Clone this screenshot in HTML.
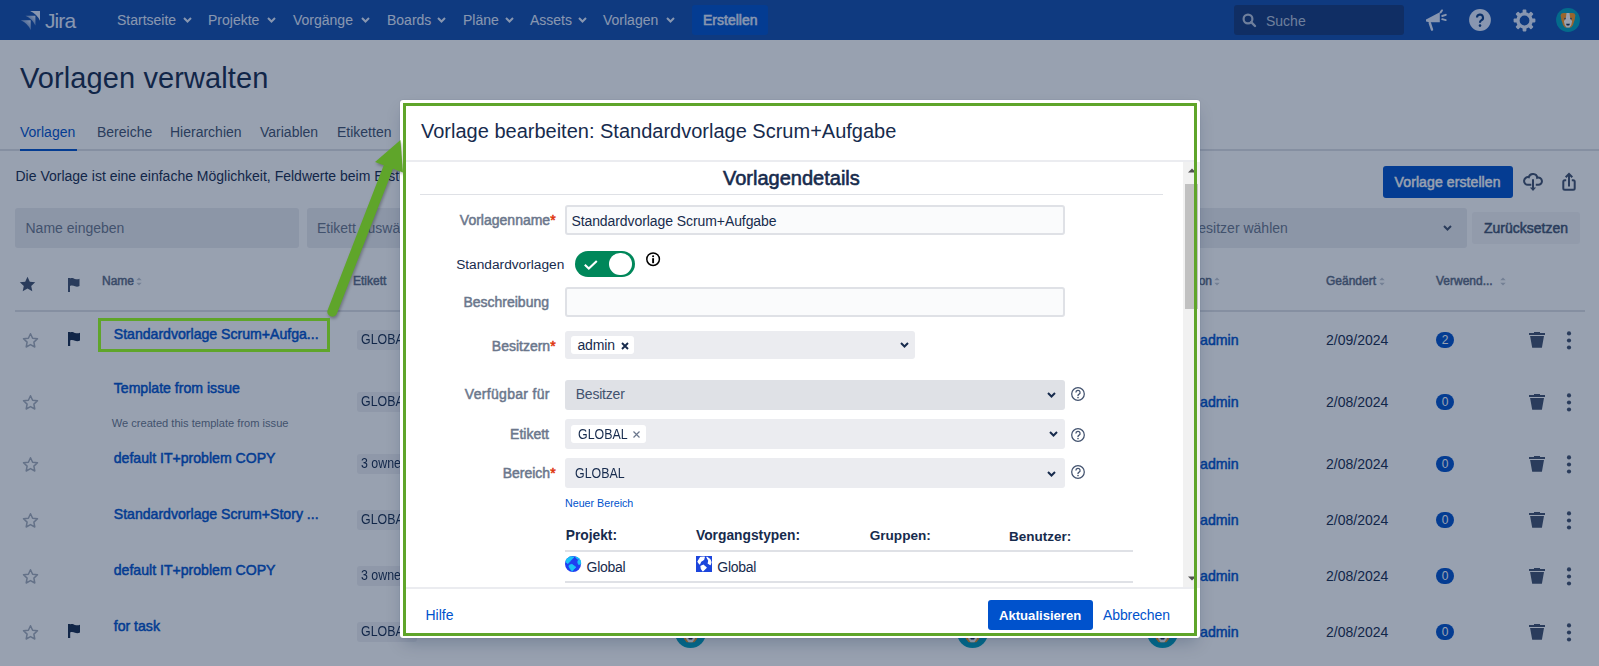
<!DOCTYPE html>
<html><head><meta charset="utf-8"><title>Vorlagen verwalten</title>
<style>
*{box-sizing:border-box;margin:0;padding:0}
html,body{width:1599px;height:666px;overflow:hidden;background:#fff;font-family:"Liberation Sans",sans-serif;color:#172b4d}
.t{position:absolute;white-space:nowrap;line-height:1}
.r{position:absolute}
.b{font-weight:bold}
.sb{-webkit-text-stroke:.5px currentColor}
.sb2{-webkit-text-stroke:.6px currentColor}
.req{color:#de350b}
svg{position:absolute;overflow:visible}
#page{position:absolute;left:0;top:0;width:1599px;height:666px;background:#fff}
#nav{position:absolute;left:0;top:0;width:1599px;height:40px;background:#134ead}
#blanket{position:absolute;left:0;top:0;width:1599px;height:666px;background:rgba(9,30,66,0.42)}
#modal{position:absolute;left:400px;top:100px;width:800px;height:538px;background:#fff;border-radius:3px;box-shadow:0 0 1px rgba(9,30,66,.31),0 8px 16px -4px rgba(9,30,66,.25)}
#gb{position:absolute;left:403px;top:103px;width:794px;height:533px;border:3px solid #5fa52a}
.badge{position:absolute;left:1436px;width:18px;height:16px;border-radius:8px;background:#0052cc;color:#fff;font-size:12px;line-height:16px;text-align:center}
</style></head><body>
<div id="page">
<div id="nav">
<svg style="left:20px;top:10px" width="21" height="21" viewBox="0 0 21 21"><defs><linearGradient id="lg" x1="0" y1="1" x2="1" y2="0"><stop offset="0" stop-color="#e4edff" stop-opacity=".95"/><stop offset=".55" stop-color="#e4edff" stop-opacity=".55"/><stop offset="1" stop-color="#e4edff"/></linearGradient></defs><path transform="translate(10.1 1)" d="M0 0H9.9V9.7Q6.8 3.1 0 0Z" fill="#e4edff"/><path transform="translate(5.5 5.8)" d="M0 0H9.9V9.7Q6.8 3.1 0 0Z" fill="url(#lg)"/><path transform="translate(0.8 10.3)" d="M0 0H9.9V9.7Q6.8 3.1 0 0Z" fill="url(#lg)"/></svg>
<div class="t " style="left:45px;top:10.02px;font-size:21px;color:#e4edff;letter-spacing:-.9px">Jira</div>
<div class="t " style="left:117px;top:13.15px;font-size:14px;color:#e4edff;">Startseite</div>
<div class="t " style="left:208px;top:13.15px;font-size:14px;color:#e4edff;">Projekte</div>
<div class="t " style="left:293px;top:13.15px;font-size:14px;color:#e4edff;">Vorgänge</div>
<div class="t " style="left:387px;top:13.15px;font-size:14px;color:#e4edff;">Boards</div>
<div class="t " style="left:463px;top:13.15px;font-size:14px;color:#e4edff;">Pläne</div>
<div class="t " style="left:530px;top:13.15px;font-size:14px;color:#e4edff;">Assets</div>
<div class="t " style="left:603px;top:13.15px;font-size:14px;color:#e4edff;">Vorlagen</div>
<svg style="left:183px;top:17px" width="9" height="6" viewBox="0 0 9 6"><path d="M1 1l3.5 3.5L8 1" stroke="#e4edff" stroke-width="2" fill="none"/></svg>
<svg style="left:267px;top:17px" width="9" height="6" viewBox="0 0 9 6"><path d="M1 1l3.5 3.5L8 1" stroke="#e4edff" stroke-width="2" fill="none"/></svg>
<svg style="left:361px;top:17px" width="9" height="6" viewBox="0 0 9 6"><path d="M1 1l3.5 3.5L8 1" stroke="#e4edff" stroke-width="2" fill="none"/></svg>
<svg style="left:437px;top:17px" width="9" height="6" viewBox="0 0 9 6"><path d="M1 1l3.5 3.5L8 1" stroke="#e4edff" stroke-width="2" fill="none"/></svg>
<svg style="left:504.5px;top:17px" width="9" height="6" viewBox="0 0 9 6"><path d="M1 1l3.5 3.5L8 1" stroke="#e4edff" stroke-width="2" fill="none"/></svg>
<svg style="left:577.5px;top:17px" width="9" height="6" viewBox="0 0 9 6"><path d="M1 1l3.5 3.5L8 1" stroke="#e4edff" stroke-width="2" fill="none"/></svg>
<svg style="left:666px;top:17px" width="9" height="6" viewBox="0 0 9 6"><path d="M1 1l3.5 3.5L8 1" stroke="#e4edff" stroke-width="2" fill="none"/></svg>
<div class="r" style="left:692px;top:5px;width:76px;height:30px;background:#0052cc;border-radius:3px"></div>
<div class="t sb" style="left:703px;top:13.15px;font-size:14px;color:#e4edff;">Erstellen</div>
<div class="r" style="left:1234px;top:5px;width:170px;height:30px;background:#153a7d;border-radius:3px"></div>
<svg style="left:1242px;top:13px" width="15" height="15" viewBox="0 0 15 15"><circle cx="6" cy="6" r="4.4" stroke="#b8c4dc" stroke-width="2.2" fill="none"/><path d="M9.2 9.2l3.8 3.8" stroke="#b8c4dc" stroke-width="2.4" stroke-linecap="round"/></svg>
<div class="t " style="left:1266px;top:14.15px;font-size:14px;color:#b8c4dc;">Suche</div>
<svg style="left:1425px;top:9px" width="23" height="22" viewBox="0 0 23 22"><path d="M1 10.5L14.8 3.2V13.2L4.5 13.3 1 12.6z" fill="#e4edff"/><path d="M4.8 14l2.2 6.6" stroke="#e4edff" stroke-width="2.4" stroke-linecap="round"/><path d="M15.6 3.4l1.4-2M17.2 7l3.6-1.2M17.2 10.2l3.6.9" stroke="#e4edff" stroke-width="1.9" stroke-linecap="round"/></svg>
<svg style="left:1469px;top:9px" width="22" height="22" viewBox="0 0 22 22"><circle cx="11" cy="11" r="10.9" fill="#e4edff"/><path d="M8 8.6a3 3 0 1 1 4.3 2.7c-.9.5-1.3 1-1.3 1.9v.6" stroke="#0b3d85" stroke-width="2.1" fill="none"/><circle cx="11" cy="16.6" r="1.3" fill="#0b3d85"/></svg>
<svg style="left:1513px;top:8.5px" width="23" height="23" viewBox="0 0 23 23"><g fill="#e4edff"><rect x="9.6" y="0.6" width="3.8" height="4" rx=".8" transform="rotate(0 11.5 11.5)"/><rect x="9.6" y="0.6" width="3.8" height="4" rx=".8" transform="rotate(45 11.5 11.5)"/><rect x="9.6" y="0.6" width="3.8" height="4" rx=".8" transform="rotate(90 11.5 11.5)"/><rect x="9.6" y="0.6" width="3.8" height="4" rx=".8" transform="rotate(135 11.5 11.5)"/><rect x="9.6" y="0.6" width="3.8" height="4" rx=".8" transform="rotate(180 11.5 11.5)"/><rect x="9.6" y="0.6" width="3.8" height="4" rx=".8" transform="rotate(225 11.5 11.5)"/><rect x="9.6" y="0.6" width="3.8" height="4" rx=".8" transform="rotate(270 11.5 11.5)"/><rect x="9.6" y="0.6" width="3.8" height="4" rx=".8" transform="rotate(315 11.5 11.5)"/></g><circle cx="11.5" cy="11.5" r="6.6" stroke="#e4edff" stroke-width="3.4" fill="none"/></svg>
<svg style="left:1556px;top:8px" width="24" height="24" viewBox="0 0 24 24"><circle cx="12" cy="12" r="11.9" fill="#00a3bf"/><path d="M4.6 7.2Q5 5 7.5 5h9Q19 5 19.4 7.2L18.6 12Q17.5 15 17 17l-2 2.5h-6L7 17Q6.5 15 5.4 12z" fill="#ff991f"/><path d="M10.5 5h3l.6 5 2 3.2-.8 3.8-1.8 2.5h-3l-1.8-2.5-.8-3.8 2-3.2z" fill="#fff"/><circle cx="9" cy="10.6" r=".9" fill="#42526e"/><circle cx="15" cy="10.6" r=".9" fill="#42526e"/><path d="M10 15.8h4l-.8 1.6h-2.4z" fill="#172b4d"/></svg>
</div>
<div class="t " style="left:20px;top:64.35px;font-size:29px;color:#172b4d;letter-spacing:.1px">Vorlagen verwalten</div>
<div class="r" style="left:0px;top:149px;width:1599px;height:2px;background:#dfe1e6;"></div>
<div class="t " style="left:20px;top:124.85px;font-size:14px;color:#0052cc;">Vorlagen</div>
<div class="r" style="left:20px;top:149px;width:57px;height:2px;background:#0052cc;"></div>
<div class="t " style="left:97px;top:124.85px;font-size:14px;color:#42526e;">Bereiche</div>
<div class="t " style="left:170px;top:124.85px;font-size:14px;color:#42526e;">Hierarchien</div>
<div class="t " style="left:260px;top:124.85px;font-size:14px;color:#42526e;">Variablen</div>
<div class="t " style="left:337px;top:124.85px;font-size:14px;color:#42526e;">Etiketten</div>
<div class="t " style="left:15.5px;top:169.40px;font-size:14px;color:#172b4d;">Die Vorlage ist eine einfache Möglichkeit, Feldwerte beim Erstellen von Vorgängen vorab auszufüllen.</div>
<div class="r" style="left:15px;top:208px;width:284px;height:40px;background:#ebecf0;border-radius:3px"></div>
<div class="t " style="left:25.5px;top:221.15px;font-size:14px;color:#6b778c;">Name eingeben</div>
<div class="r" style="left:307px;top:208px;width:300px;height:40px;background:#ebecf0;border-radius:3px"></div>
<div class="t " style="left:317px;top:221.15px;font-size:14px;color:#6b778c;">Etikett auswählen</div>
<div class="r" style="left:1100px;top:208px;width:367px;height:40px;background:#ebecf0;border-radius:3px"></div>
<div class="t " style="left:1189px;top:221.15px;font-size:14px;color:#6b778c;">Besitzer wählen</div>
<svg style="left:1443px;top:225px" width="9" height="6" viewBox="0 0 9 6"><path d="M1 1l3.5 3.5L8 1" stroke="#42526e" stroke-width="2" fill="none"/></svg>
<div class="r" style="left:1472px;top:212px;width:108px;height:32px;background:#f4f5f7;border-radius:3px"></div>
<div class="t sb" style="left:1484px;top:221.15px;font-size:14px;color:#42526e;">Zurücksetzen</div>
<div class="r" style="left:1383px;top:166px;width:130px;height:32px;background:#0052cc;border-radius:3px"></div>
<div class="t sb" style="left:1394.6px;top:175.15px;font-size:14px;color:#fff;letter-spacing:.1px">Vorlage erstellen</div>
<svg style="left:1522px;top:172px" width="22" height="20" viewBox="0 0 22 20"><path d="M9.3 12.8H6A3.85 3.85 0 1 1 6.8 5.2A4.26 4.26 0 0 1 15.2 5.8A3.6 3.6 0 1 1 16 12.8H13.8" stroke="#42526e" stroke-width="2" fill="none"/><path d="M11 7.3v9" stroke="#42526e" stroke-width="2"/><path d="M7.9 15.6h6.2L11 19z" fill="#42526e"/></svg>
<svg style="left:1561px;top:172px" width="16" height="20" viewBox="0 0 16 20"><path d="M5.2 8.2H3.8a1.5 1.5 0 0 0-1.5 1.5v6.6a1.5 1.5 0 0 0 1.5 1.5h8.4a1.5 1.5 0 0 0 1.5-1.5V9.7a1.5 1.5 0 0 0-1.5-1.5h-1.4" stroke="#42526e" stroke-width="2" fill="none"/><path d="M8 2.2v12.3M4.7 5.3L8 2l3.3 3.3" stroke="#42526e" stroke-width="2" fill="none"/></svg>
<svg style="left:18.5px;top:275.5px" width="17" height="17" viewBox="0 0 17 17"><path d="M8.5 .8l2.3 4.9 5.4.6-4 3.7 1.1 5.3-4.8-2.7-4.8 2.7 1.1-5.3-4-3.7 5.4-.6z" fill="#42526e"/></svg>
<svg style="left:67px;top:276.5px" width="13" height="15" viewBox="0 0 13 15"><path d="M1 1h2v14H1z" fill="#42526e"/><path d="M3 1.5c2-1 3.5 0 5 .5s3 .5 4.5-.3V9c-1.5.8-3 .8-4.5.3S5 8 3 9z" fill="#42526e"/></svg>
<div class="t sb" style="left:102px;top:274.84px;font-size:12px;color:#5e6c84;">Name</div>
<svg style="left:136px;top:276.5px" width="6" height="9" viewBox="0 0 6 9"><path d="M0.3 3.3L3 0.5 5.7 3.3zM0.3 5.7L3 8.5 5.7 5.7z" fill="#c1c7d0"/></svg>
<div class="t sb" style="left:353px;top:274.84px;font-size:12px;color:#5e6c84;">Etikett</div>
<div class="t sb" style="left:1172px;top:274.84px;font-size:12px;color:#5e6c84;">Version</div>
<svg style="left:1214px;top:276.5px" width="6" height="9" viewBox="0 0 6 9"><path d="M0.3 3.3L3 0.5 5.7 3.3zM0.3 5.7L3 8.5 5.7 5.7z" fill="#c1c7d0"/></svg>
<div class="t sb" style="left:1326px;top:274.84px;font-size:12px;color:#5e6c84;">Geändert</div>
<svg style="left:1379px;top:276.5px" width="6" height="9" viewBox="0 0 6 9"><path d="M0.3 3.3L3 0.5 5.7 3.3zM0.3 5.7L3 8.5 5.7 5.7z" fill="#c1c7d0"/></svg>
<div class="t sb" style="left:1436px;top:274.84px;font-size:12px;color:#5e6c84;">Verwend...</div>
<svg style="left:1500px;top:276.5px" width="6" height="9" viewBox="0 0 6 9"><path d="M0.3 3.3L3 0.5 5.7 3.3zM0.3 5.7L3 8.5 5.7 5.7z" fill="#c1c7d0"/></svg>
<div class="r" style="left:15px;top:310px;width:1570px;height:2px;background:#dfe1e6;"></div>
<svg style="left:22px;top:331.5px" width="17" height="17" viewBox="0 0 17 17"><path d="M8.5 1.7l2.1 4.5 4.9.6-3.6 3.3.9 4.9-4.3-2.4-4.3 2.4.9-4.9L1.5 6.8l4.9-.6z" fill="none" stroke="#a5adba" stroke-width="1.5" stroke-linejoin="round"/></svg>
<svg style="left:67px;top:331px" width="14" height="15" viewBox="0 0 14 15"><path d="M1 1h2.2v14H1z" fill="#172b4d"/><path d="M3 1.5c2-1 3.5 0 5 .5s3.5.5 5-.3V9.5c-1.5.8-3.5.8-5 .3S5 8.5 3 9.5z" fill="#172b4d"/></svg>
<div class="t sb" style="left:113.75px;top:327.31px;font-size:14.1px;color:#0052cc;">Standardvorlage Scrum+Aufga...</div>
<div class="r" style="left:357px;top:330px;width:60px;height:20px;background:#eff0f3;border-radius:3px"></div>
<div class="t " style="left:361px;top:332.15px;font-size:14px;color:#172b4d;transform:scaleX(.885);transform-origin:0 0">GLOBAL</div>
<div class="t sb" style="left:1200px;top:332.98px;font-size:14.2px;color:#0052cc;">admin</div>
<div class="t " style="left:1326px;top:333.15px;font-size:14px;color:#172b4d;">2/09/2024</div>
<div class="badge" style="top:332px">2</div>
<svg style="left:1529px;top:331px" width="16" height="18" viewBox="0 0 16 18"><path d="M5 .9h6v1.3H5z M0 1.9h16v2H0z M1.1 5h13.9l-2.1 11.8H3.2z" fill="#42526e"/></svg>
<svg style="left:1566px;top:330.5px" width="6" height="19" viewBox="0 0 6 19"><circle cx="3" cy="2.4" r="2.1" fill="#42526e"/><circle cx="3" cy="9.5" r="2.1" fill="#42526e"/><circle cx="3" cy="16.5" r="2.1" fill="#42526e"/></svg>
<svg style="left:22px;top:393.5px" width="17" height="17" viewBox="0 0 17 17"><path d="M8.5 1.7l2.1 4.5 4.9.6-3.6 3.3.9 4.9-4.3-2.4-4.3 2.4.9-4.9L1.5 6.8l4.9-.6z" fill="none" stroke="#a5adba" stroke-width="1.5" stroke-linejoin="round"/></svg>
<div class="t sb" style="left:113.75px;top:381.06px;font-size:14.1px;color:#0052cc;">Template from issue</div>
<div class="r" style="left:357px;top:392px;width:60px;height:20px;background:#eff0f3;border-radius:3px"></div>
<div class="t " style="left:361px;top:394.15px;font-size:14px;color:#172b4d;transform:scaleX(.885);transform-origin:0 0">GLOBAL</div>
<div class="t sb" style="left:1200px;top:394.98px;font-size:14.2px;color:#0052cc;">admin</div>
<div class="t " style="left:1326px;top:395.15px;font-size:14px;color:#172b4d;">2/08/2024</div>
<div class="badge" style="top:394px">0</div>
<svg style="left:1529px;top:393px" width="16" height="18" viewBox="0 0 16 18"><path d="M5 .9h6v1.3H5z M0 1.9h16v2H0z M1.1 5h13.9l-2.1 11.8H3.2z" fill="#42526e"/></svg>
<svg style="left:1566px;top:392.5px" width="6" height="19" viewBox="0 0 6 19"><circle cx="3" cy="2.4" r="2.1" fill="#42526e"/><circle cx="3" cy="9.5" r="2.1" fill="#42526e"/><circle cx="3" cy="16.5" r="2.1" fill="#42526e"/></svg>
<svg style="left:22px;top:455.5px" width="17" height="17" viewBox="0 0 17 17"><path d="M8.5 1.7l2.1 4.5 4.9.6-3.6 3.3.9 4.9-4.3-2.4-4.3 2.4.9-4.9L1.5 6.8l4.9-.6z" fill="none" stroke="#a5adba" stroke-width="1.5" stroke-linejoin="round"/></svg>
<div class="t sb" style="left:113.75px;top:451.31px;font-size:14.1px;color:#0052cc;">default IT+problem COPY</div>
<div class="r" style="left:357px;top:454px;width:60px;height:20px;background:#eff0f3;border-radius:3px"></div>
<div class="t " style="left:361px;top:456.15px;font-size:14px;color:#172b4d;transform:scaleX(.885);transform-origin:0 0">3 owners</div>
<div class="t sb" style="left:1200px;top:456.98px;font-size:14.2px;color:#0052cc;">admin</div>
<div class="t " style="left:1326px;top:457.15px;font-size:14px;color:#172b4d;">2/08/2024</div>
<div class="badge" style="top:456px">0</div>
<svg style="left:1529px;top:455px" width="16" height="18" viewBox="0 0 16 18"><path d="M5 .9h6v1.3H5z M0 1.9h16v2H0z M1.1 5h13.9l-2.1 11.8H3.2z" fill="#42526e"/></svg>
<svg style="left:1566px;top:454.5px" width="6" height="19" viewBox="0 0 6 19"><circle cx="3" cy="2.4" r="2.1" fill="#42526e"/><circle cx="3" cy="9.5" r="2.1" fill="#42526e"/><circle cx="3" cy="16.5" r="2.1" fill="#42526e"/></svg>
<svg style="left:22px;top:511.5px" width="17" height="17" viewBox="0 0 17 17"><path d="M8.5 1.7l2.1 4.5 4.9.6-3.6 3.3.9 4.9-4.3-2.4-4.3 2.4.9-4.9L1.5 6.8l4.9-.6z" fill="none" stroke="#a5adba" stroke-width="1.5" stroke-linejoin="round"/></svg>
<div class="t sb" style="left:113.75px;top:507.31px;font-size:14.1px;color:#0052cc;">Standardvorlage Scrum+Story ...</div>
<div class="r" style="left:357px;top:510px;width:60px;height:20px;background:#eff0f3;border-radius:3px"></div>
<div class="t " style="left:361px;top:512.15px;font-size:14px;color:#172b4d;transform:scaleX(.885);transform-origin:0 0">GLOBAL</div>
<div class="t sb" style="left:1200px;top:512.98px;font-size:14.2px;color:#0052cc;">admin</div>
<div class="t " style="left:1326px;top:513.15px;font-size:14px;color:#172b4d;">2/08/2024</div>
<div class="badge" style="top:512px">0</div>
<svg style="left:1529px;top:511px" width="16" height="18" viewBox="0 0 16 18"><path d="M5 .9h6v1.3H5z M0 1.9h16v2H0z M1.1 5h13.9l-2.1 11.8H3.2z" fill="#42526e"/></svg>
<svg style="left:1566px;top:510.5px" width="6" height="19" viewBox="0 0 6 19"><circle cx="3" cy="2.4" r="2.1" fill="#42526e"/><circle cx="3" cy="9.5" r="2.1" fill="#42526e"/><circle cx="3" cy="16.5" r="2.1" fill="#42526e"/></svg>
<svg style="left:22px;top:567.5px" width="17" height="17" viewBox="0 0 17 17"><path d="M8.5 1.7l2.1 4.5 4.9.6-3.6 3.3.9 4.9-4.3-2.4-4.3 2.4.9-4.9L1.5 6.8l4.9-.6z" fill="none" stroke="#a5adba" stroke-width="1.5" stroke-linejoin="round"/></svg>
<div class="t sb" style="left:113.75px;top:563.06px;font-size:14.1px;color:#0052cc;">default IT+problem COPY</div>
<div class="r" style="left:357px;top:566px;width:60px;height:20px;background:#eff0f3;border-radius:3px"></div>
<div class="t " style="left:361px;top:568.15px;font-size:14px;color:#172b4d;transform:scaleX(.885);transform-origin:0 0">3 owners</div>
<div class="t sb" style="left:1200px;top:568.98px;font-size:14.2px;color:#0052cc;">admin</div>
<div class="t " style="left:1326px;top:569.15px;font-size:14px;color:#172b4d;">2/08/2024</div>
<div class="badge" style="top:568px">0</div>
<svg style="left:1529px;top:567px" width="16" height="18" viewBox="0 0 16 18"><path d="M5 .9h6v1.3H5z M0 1.9h16v2H0z M1.1 5h13.9l-2.1 11.8H3.2z" fill="#42526e"/></svg>
<svg style="left:1566px;top:566.5px" width="6" height="19" viewBox="0 0 6 19"><circle cx="3" cy="2.4" r="2.1" fill="#42526e"/><circle cx="3" cy="9.5" r="2.1" fill="#42526e"/><circle cx="3" cy="16.5" r="2.1" fill="#42526e"/></svg>
<svg style="left:22px;top:623.5px" width="17" height="17" viewBox="0 0 17 17"><path d="M8.5 1.7l2.1 4.5 4.9.6-3.6 3.3.9 4.9-4.3-2.4-4.3 2.4.9-4.9L1.5 6.8l4.9-.6z" fill="none" stroke="#a5adba" stroke-width="1.5" stroke-linejoin="round"/></svg>
<svg style="left:67px;top:623px" width="14" height="15" viewBox="0 0 14 15"><path d="M1 1h2.2v14H1z" fill="#172b4d"/><path d="M3 1.5c2-1 3.5 0 5 .5s3.5.5 5-.3V9.5c-1.5.8-3.5.8-5 .3S5 8.5 3 9.5z" fill="#172b4d"/></svg>
<div class="t sb" style="left:113.75px;top:618.81px;font-size:14.1px;color:#0052cc;">for task</div>
<div class="r" style="left:357px;top:622px;width:60px;height:20px;background:#eff0f3;border-radius:3px"></div>
<div class="t " style="left:361px;top:624.15px;font-size:14px;color:#172b4d;transform:scaleX(.885);transform-origin:0 0">GLOBAL</div>
<div class="t sb" style="left:1200px;top:624.98px;font-size:14.2px;color:#0052cc;">admin</div>
<div class="t " style="left:1326px;top:625.15px;font-size:14px;color:#172b4d;">2/08/2024</div>
<div class="badge" style="top:624px">0</div>
<svg style="left:1529px;top:623px" width="16" height="18" viewBox="0 0 16 18"><path d="M5 .9h6v1.3H5z M0 1.9h16v2H0z M1.1 5h13.9l-2.1 11.8H3.2z" fill="#42526e"/></svg>
<svg style="left:1566px;top:622.5px" width="6" height="19" viewBox="0 0 6 19"><circle cx="3" cy="2.4" r="2.1" fill="#42526e"/><circle cx="3" cy="9.5" r="2.1" fill="#42526e"/><circle cx="3" cy="16.5" r="2.1" fill="#42526e"/></svg>
<div class="t " style="left:111.75px;top:418.10px;font-size:11.1px;color:#6b778c;">We created this template from issue</div>
<svg style="left:674.5px;top:617px" width="31" height="31" viewBox="0 0 24 24"><circle cx="12" cy="12" r="12" fill="#00a3bf"/><path d="M4.6 7.2Q5 5 7.5 5h9Q19 5 19.4 7.2L18.6 12Q17.5 15 17 17l-2 2.5h-6L7 17Q6.5 15 5.4 12z" fill="#ff991f"/><path d="M10.5 5h3l.6 5 2 3.2-.8 3.8-1.8 2.5h-3l-1.8-2.5-.8-3.8 2-3.2z" fill="#fff"/><path d="M10 15.8h4l-.8 1.6h-2.4z" fill="#172b4d"/></svg>
<svg style="left:956.5px;top:617px" width="31" height="31" viewBox="0 0 24 24"><circle cx="12" cy="12" r="12" fill="#00a3bf"/><path d="M4.6 7.2Q5 5 7.5 5h9Q19 5 19.4 7.2L18.6 12Q17.5 15 17 17l-2 2.5h-6L7 17Q6.5 15 5.4 12z" fill="#ff991f"/><path d="M10.5 5h3l.6 5 2 3.2-.8 3.8-1.8 2.5h-3l-1.8-2.5-.8-3.8 2-3.2z" fill="#fff"/><path d="M10 15.8h4l-.8 1.6h-2.4z" fill="#172b4d"/></svg>
<svg style="left:1146.5px;top:617px" width="31" height="31" viewBox="0 0 24 24"><circle cx="12" cy="12" r="12" fill="#00a3bf"/><path d="M4.6 7.2Q5 5 7.5 5h9Q19 5 19.4 7.2L18.6 12Q17.5 15 17 17l-2 2.5h-6L7 17Q6.5 15 5.4 12z" fill="#ff991f"/><path d="M10.5 5h3l.6 5 2 3.2-.8 3.8-1.8 2.5h-3l-1.8-2.5-.8-3.8 2-3.2z" fill="#fff"/><path d="M10 15.8h4l-.8 1.6h-2.4z" fill="#172b4d"/></svg>
</div>
<div id="blanket"></div>
<div id="modal"></div>
<div class="t " style="left:421px;top:121.07px;font-size:20px;color:#172b4d;">Vorlage bearbeiten: Standardvorlage Scrum+Aufgabe</div>
<div class="r" style="left:406px;top:160px;width:788px;height:2px;background:#ebecf0;"></div>
<div class="r" style="left:1183px;top:162px;width:17px;height:426px;background:#f1f1f1;"></div>
<div class="r" style="left:1185px;top:184px;width:13px;height:125px;background:#c1c1c1;"></div>
<svg style="left:1188px;top:168px" width="8" height="5" viewBox="0 0 8 5"><path d="M0 4.5L4 0.5 8 4.5z" fill="#505050"/></svg>
<svg style="left:1188px;top:575.5px" width="8" height="5" viewBox="0 0 8 5"><path d="M0 .5L4 4.5 8 .5z" fill="#505050"/></svg>
<div class="t sb2" style="left:723px;top:167.82px;font-size:20px;color:#172b4d;">Vorlagendetails</div>
<div class="r" style="left:420px;top:194px;width:743px;height:1px;background:#dfe1e6;"></div>
<div class="t sb" style="right:1043.4px;top:212.95px;font-size:14px;color:#6b778c;letter-spacing:0px">Vorlagenname<span class="req">*</span></div>
<div class="r" style="left:565px;top:205px;width:500px;height:30px;background:#fafbfc;border:2px solid #dfe1e6;border-radius:3px"></div>
<div class="t " style="left:571.4px;top:214.15px;font-size:14px;color:#172b4d;letter-spacing:-.08px">Standardvorlage Scrum+Aufgabe</div>
<div class="t " style="left:456.2px;top:258.20px;font-size:13.7px;color:#172b4d;">Standardvorlagen</div>
<div class="r" style="left:575px;top:251px;width:60px;height:26px;background:#00875a;border-radius:13px"></div>
<div class="r" style="left:608.8px;top:252.6px;width:22.8px;height:22.8px;border-radius:50%;background:#fff"></div>
<svg style="left:583px;top:258.5px" width="16" height="12" viewBox="0 0 16 12"><path d="M1.8 5.8l4 3.8 8-7.6" stroke="#fff" stroke-width="2.1" fill="none"/></svg>
<svg style="left:645.5px;top:251.5px" width="15" height="15" viewBox="0 0 15 15"><circle cx="7.1" cy="7.2" r="6.3" stroke="#000" stroke-width="1.5" fill="none"/><circle cx="7.1" cy="4.2" r="1.05" fill="#000"/><path d="M7.1 6.2v5" stroke="#000" stroke-width="1.9"/></svg>
<div class="t sb" style="right:1050px;top:295.15px;font-size:14px;color:#6b778c;letter-spacing:0px">Beschreibung</div>
<div class="r" style="left:565px;top:287px;width:500px;height:29.5px;background:#fafbfc;border:2px solid #dfe1e6;border-radius:3px"></div>
<div class="t sb" style="right:1043.4px;top:339.15px;font-size:14px;color:#6b778c;letter-spacing:0px">Besitzern<span class="req">*</span></div>
<div class="r" style="left:565px;top:331px;width:350px;height:28px;background:#ebecf0;border-radius:3px"></div>
<div class="r" style="left:571px;top:336px;width:63px;height:18px;background:#fff;border-radius:3px"></div>
<div class="t " style="left:577.4px;top:337.95px;font-size:14px;color:#172b4d;letter-spacing:-.1px">admin</div>
<svg style="left:621px;top:341.5px" width="8" height="8" viewBox="0 0 8 8"><path d="M1 1l6 6M7 1L1 7" stroke="#172b4d" stroke-width="1.9"/></svg>
<svg style="left:900px;top:342px" width="9" height="6" viewBox="0 0 9 6"><path d="M1 1l3.5 3.5L8 1" stroke="#172b4d" stroke-width="2" fill="none"/></svg>
<div class="t sb" style="right:1049.3px;top:387.15px;font-size:14px;color:#6b778c;letter-spacing:0.3px">Verfügbar für</div>
<div class="r" style="left:565px;top:380px;width:500px;height:30px;background:#dfe1e6;border-radius:3px"></div>
<div class="t " style="left:575.7px;top:386.75px;font-size:14px;color:#42526e;letter-spacing:-.2px">Besitzer</div>
<svg style="left:1071px;top:386.8px" width="14" height="14" viewBox="0 0 14 14"><circle cx="7" cy="7" r="6.3" stroke="#42526e" stroke-width="1.25" fill="none"/><path d="M4.9 5.5a2.1 2.1 0 1 1 2.9 1.9c-.5.3-.8.6-.8 1.2v.5" stroke="#42526e" stroke-width="1.25" fill="none"/><circle cx="7" cy="10.6" r=".8" fill="#42526e"/></svg>
<svg style="left:1071px;top:427.8px" width="14" height="14" viewBox="0 0 14 14"><circle cx="7" cy="7" r="6.3" stroke="#42526e" stroke-width="1.25" fill="none"/><path d="M4.9 5.5a2.1 2.1 0 1 1 2.9 1.9c-.5.3-.8.6-.8 1.2v.5" stroke="#42526e" stroke-width="1.25" fill="none"/><circle cx="7" cy="10.6" r=".8" fill="#42526e"/></svg>
<svg style="left:1071px;top:465.3px" width="14" height="14" viewBox="0 0 14 14"><circle cx="7" cy="7" r="6.3" stroke="#42526e" stroke-width="1.25" fill="none"/><path d="M4.9 5.5a2.1 2.1 0 1 1 2.9 1.9c-.5.3-.8.6-.8 1.2v.5" stroke="#42526e" stroke-width="1.25" fill="none"/><circle cx="7" cy="10.6" r=".8" fill="#42526e"/></svg>
<svg style="left:1047px;top:392px" width="9" height="6" viewBox="0 0 9 6"><path d="M1 1l3.5 3.5L8 1" stroke="#172b4d" stroke-width="2" fill="none"/></svg>
<div class="t sb" style="right:1050px;top:427.15px;font-size:14px;color:#6b778c;letter-spacing:0px">Etikett</div>
<div class="r" style="left:565px;top:419px;width:500px;height:30px;background:#ebecf0;border-radius:3px"></div>
<div class="r" style="left:571px;top:425px;width:75px;height:18px;background:#fff;border-radius:3px"></div>
<div class="t " style="left:577.5px;top:427.15px;font-size:14px;color:#172b4d;transform:scaleX(.885);transform-origin:0 0">GLOBAL</div>
<svg style="left:633px;top:430.8px" width="7" height="7" viewBox="0 0 7 7"><path d="M.5 .5l6 6M6.5 .5l-6 6" stroke="#6b778c" stroke-width="1.2"/></svg>
<svg style="left:1048.5px;top:431px" width="9" height="6" viewBox="0 0 9 6"><path d="M1 1l3.5 3.5L8 1" stroke="#172b4d" stroke-width="2" fill="none"/></svg>
<div class="t sb" style="right:1043.4px;top:466.15px;font-size:14px;color:#6b778c;letter-spacing:0px">Bereich<span class="req">*</span></div>
<div class="r" style="left:565px;top:458px;width:500px;height:30px;background:#ebecf0;border-radius:3px"></div>
<div class="t " style="left:575.4px;top:465.65px;font-size:14px;color:#172b4d;transform:scaleX(.885);transform-origin:0 0">GLOBAL</div>
<svg style="left:1047px;top:470.5px" width="9" height="6" viewBox="0 0 9 6"><path d="M1 1l3.5 3.5L8 1" stroke="#172b4d" stroke-width="2" fill="none"/></svg>
<div class="t " style="left:565px;top:497.94px;font-size:10.7px;color:#0052cc;">Neuer Bereich</div>
<div class="t b" style="left:565.7px;top:529.32px;font-size:13.8px;color:#172b4d;">Projekt:</div>
<div class="t b" style="left:696px;top:529.32px;font-size:13.8px;color:#172b4d;">Vorgangstypen:</div>
<div class="t b" style="left:869.7px;top:529.49px;font-size:13.6px;color:#172b4d;">Gruppen:</div>
<div class="t b" style="left:1009px;top:529.57px;font-size:13.5px;color:#172b4d;">Benutzer:</div>
<div class="r" style="left:565px;top:550px;width:568px;height:2px;background:#dfe1e6;"></div>
<svg style="left:565px;top:556px" width="16" height="16" viewBox="0 0 16 16"><circle cx="8" cy="8" r="8" fill="#1f3ff0"/><path d="M1.3 3.6L4.6 0.9 9 0.9 7.9 2.3 5.6 4.6 4 6.6 2.5 7.5 1 6Z M4.3 9.2L6.9 8.3 10.9 11.2 8.5 13.5 7.3 15.3 5.3 12.9 4 10.6Z M13 4.6L15.3 4 15.8 8 13.5 8.4 12.8 6.6Z M10.5 1.2L13 1.6 14.5 3.2 12.5 3Z" fill="#19c3f7" stroke="#19c3f7" stroke-width=".8" stroke-linejoin="round"/></svg>
<div class="t " style="left:586.6px;top:559.95px;font-size:14px;color:#172b4d;letter-spacing:-.3px">Global</div>
<svg style="left:696px;top:556px" width="16" height="16" viewBox="0 0 16 16"><rect width="16" height="16" fill="#1c45dc"/><path d="M2 5.6L4.6 1.3 8.3 1 7.6 3.6 4.6 5.6 3.6 7.9Z M5 10.2L7.3 9.2 10.2 11.6 6.9 14.9 5.3 12.5Z M10.9 1.3L13.9 3.6 15 6.3 14.2 8.6 12.2 7.3 12.9 4.6Z" fill="#fff" stroke="#fff" stroke-width="1.2" stroke-linejoin="round"/></svg>
<div class="t " style="left:717.3px;top:559.95px;font-size:14px;color:#172b4d;letter-spacing:-.3px">Global</div>
<div class="r" style="left:565px;top:581px;width:568px;height:2px;background:#dfe1e6;"></div>
<div class="r" style="left:406px;top:587px;width:788px;height:2px;background:#ebecf0;"></div>
<div class="t " style="left:425.5px;top:608.15px;font-size:14px;color:#0052cc;">Hilfe</div>
<div class="r" style="left:988px;top:600px;width:105px;height:30px;background:#0052cc;border-radius:3px"></div>
<div class="t b" style="left:999px;top:608.61px;font-size:13.1px;color:#fff;">Aktualisieren</div>
<div class="t " style="left:1103px;top:608.15px;font-size:14px;color:#0052cc;letter-spacing:-.1px">Abbrechen</div>
<svg style="left:0;top:0" width="1599" height="666" viewBox="0 0 1599 666"><g style="filter:drop-shadow(1px 2px 1.5px rgba(0,0,0,.28))"><path d="M332.3 311.7L388 168" stroke="#5fa52a" stroke-width="10" stroke-linecap="round"/><path d="M400.5 140L375 162L403 172.5z" fill="#5fa52a"/></g></svg>
<div id="gb"></div>
<div style="position:absolute;left:98px;top:317.5px;width:231.5px;height:34.25px;border:3px solid #5fa52a"></div>
</body></html>
